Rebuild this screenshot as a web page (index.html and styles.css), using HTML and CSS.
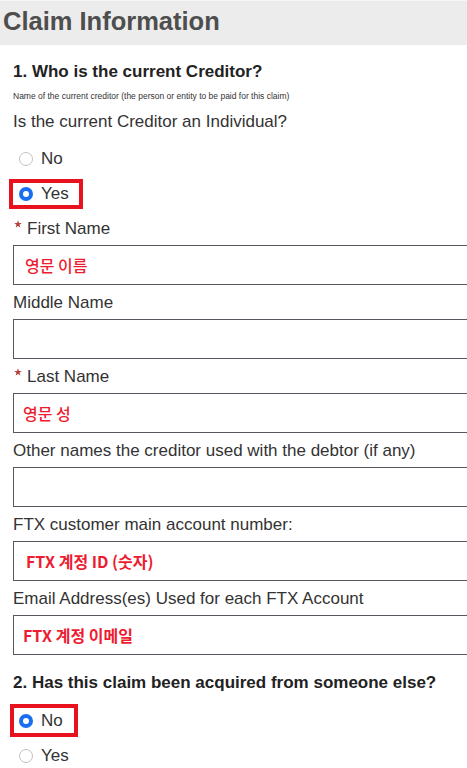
FILE: index.html
```html
<!DOCTYPE html>
<html lang="en">
<head>
<meta charset="utf-8">
<title>Claim Information</title>
<link rel="stylesheet" href="styles.css">
</head>
<body>
<header class="page-head">
  <h1 class="page-title">Claim Information</h1>
</header>
<main class="form">
  <section class="question">
    <h2 class="q-title">1. Who is the current Creditor?</h2>
    <p class="q-hint">Name of the current creditor (the person or entity to be paid for this claim)</p>
    <p class="q-text">Is the current Creditor an Individual?</p>
    <div class="options">
      <div class="option"><span class="radio"></span>No</div>
      <div class="option option--mark-a"><span class="radio radio--on"></span>Yes</div>
    </div>
  </section>

  <div class="fields">
    <div class="field">
      <div class="field-label"><svg class="req" viewBox="0 0 8 8" width="8" height="8"><polygon points="4,0.3 4.94,3.01 7.8,3.06 5.52,4.79 6.35,7.54 4,5.9 1.65,7.54 2.48,4.79 0.2,3.06 3.06,3.01"/></svg>First Name</div>
      <div class="field-input"><span class="note note--medium">영문 이름</span></div>
    </div>
    <div class="field">
      <div class="field-label">Middle Name</div>
      <div class="field-input"></div>
    </div>
    <div class="field">
      <div class="field-label"><svg class="req" viewBox="0 0 8 8" width="8" height="8"><polygon points="4,0.3 4.94,3.01 7.8,3.06 5.52,4.79 6.35,7.54 4,5.9 1.65,7.54 2.48,4.79 0.2,3.06 3.06,3.01"/></svg>Last Name</div>
      <div class="field-input"><span class="note note--medium note--tight">영문 성</span></div>
    </div>
    <div class="field">
      <div class="field-label">Other names the creditor used with the debtor (if any)</div>
      <div class="field-input"></div>
    </div>
    <div class="field">
      <div class="field-label">FTX customer main account number:</div>
      <div class="field-input"><span class="note note--bold note--wide">FTX 계정 ID (숫자)</span></div>
    </div>
    <div class="field">
      <div class="field-label">Email Address(es) Used for each FTX Account</div>
      <div class="field-input"><span class="note note--bold note--tight">FTX 계정 이메일</span></div>
    </div>
  </div>

  <section class="question question--second">
    <h2 class="q-title">2. Has this claim been acquired from someone else?</h2>
    <div class="options">
      <div class="option option--mark-b"><span class="radio radio--on"></span>No</div>
      <div class="option"><span class="radio"></span>Yes</div>
    </div>
  </section>
</main>
</body>
</html>
```

FILE: styles.css
```css
html, body {
  margin: 0;
  padding: 0;
  background: #ffffff;
}

body {
  font-family: "Liberation Sans", Arial, sans-serif;
  color: #333333;
  overflow: hidden;
}

.page-head {
  border-top: 1px solid #f6f6f6;
  background: #ececec;
  height: 45px;
  box-sizing: border-box;
  padding: 5px 0 0 3px;
}

.page-title {
  margin: 0;
  font-size: 25.5px;
  line-height: 30px;
  font-weight: bold;
  color: #4e4e4e;
}

.form {
  padding-left: 13px;
}

.question {
  margin-top: 16.6px;
}

.question--second {
  margin-top: 18.4px;
}

.q-title {
  margin: 0;
  font-size: 17px;
  line-height: 20px;
  font-weight: bold;
  color: #222222;
}

.q-hint {
  margin: 9px 0 0;
  font-size: 8.5px;
  line-height: 10px;
  color: #333333;
}

.q-text {
  margin: 11.3px 0 0;
  font-size: 17px;
  line-height: 20px;
}

.options {
  margin-top: 17.6px;
  display: flex;
  flex-direction: column;
  gap: 15px;
}

.question--second .options {
  margin-top: 18.4px;
}

.option {
  position: relative;
  display: flex;
  align-items: center;
  gap: 8px;
  height: 20px;
  font-size: 17px;
  line-height: 20px;
  color: #333333;
}

.radio {
  box-sizing: border-box;
  width: 14px;
  height: 14px;
  margin-left: 6px;
  border-radius: 50%;
  border: 1px solid #c2c2c2;
  background: #ffffff;
}

.radio--on {
  border: 4.5px solid #1a6ff0;
}

.option--mark-a::after,
.option--mark-b::after {
  content: "";
  position: absolute;
  box-sizing: border-box;
  border: 4px solid #e8121e;
}

.option--mark-a::after {
  left: -4px;
  top: -5px;
  width: 74px;
  height: 30px;
}

.option--mark-b::after {
  left: -3px;
  top: -7px;
  width: 68px;
  height: 33px;
}

.fields {
  margin-top: 14.2px;
  display: flex;
  flex-direction: column;
  gap: 8px;
}

.field-label {
  display: flex;
  align-items: flex-start;
  font-size: 17px;
  line-height: 20px;
  color: #333333;
  white-space: nowrap;
}

.req {
  flex: none;
  margin: 1px 5px 0 1px;
  fill: #b3423d;
}

.field-input {
  margin-top: 6px;
  box-sizing: border-box;
  height: 40px;
  border: 1px solid #53575e;
  border-right: 0;
  display: flex;
  align-items: center;
  padding-left: 11px;
}

.note {
  font-family: "Noto Sans CJK KR", "Noto Sans", sans-serif;
  font-size: 16px;
  line-height: 20px;
  color: #ee1c30;
}

.note--medium {
  font-weight: 500;
}

.note--bold {
  font-weight: 700;
}

.note--tight {
  margin-left: -2px;
}

.note--wide {
  margin-left: 1px;
}
```
